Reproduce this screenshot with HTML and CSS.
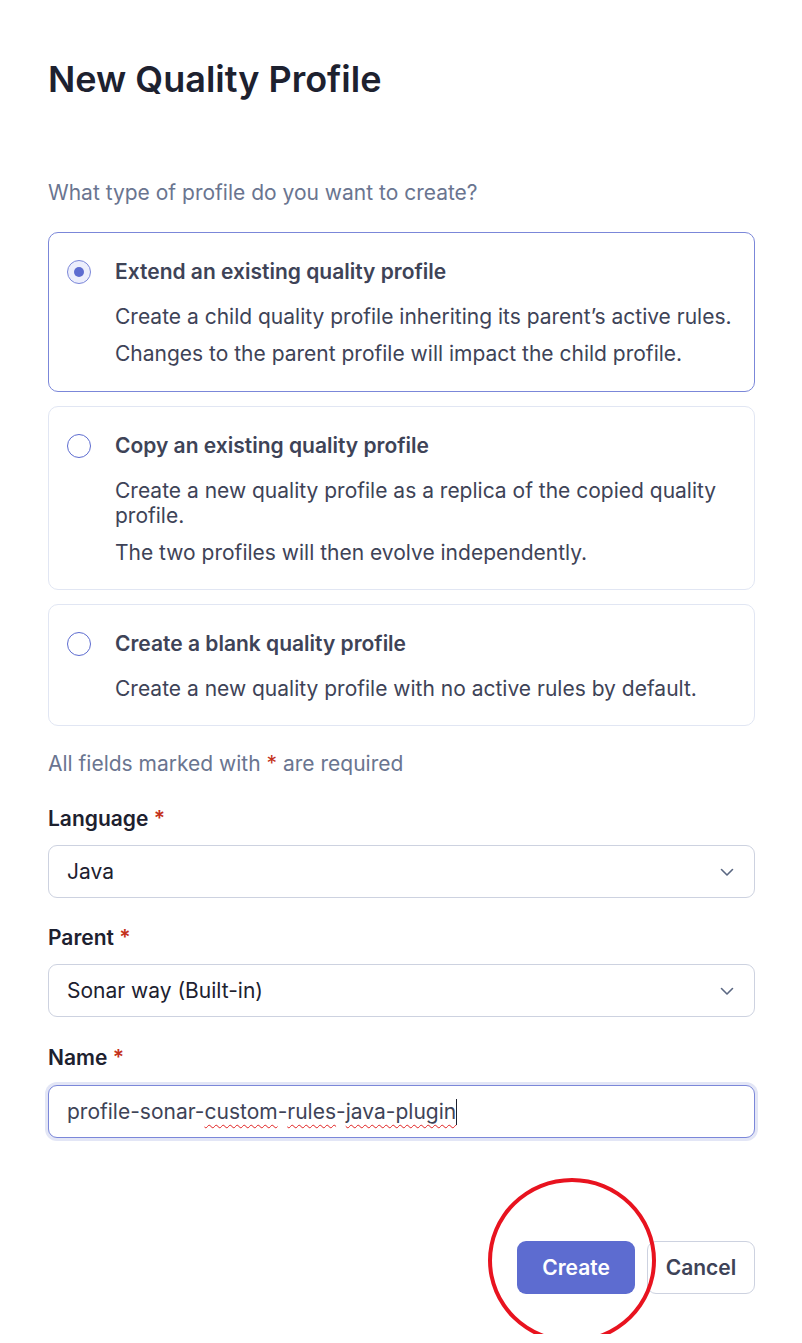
FILE: index.html
```html
<!DOCTYPE html>
<html lang="en">
<head>
<meta charset="utf-8">
<title>New Quality Profile</title>
<link rel="stylesheet" href="styles.css">
</head>
<body>
<div class="page">
  <h1 class="title">New Quality Profile</h1>
  <p class="question">What type of profile do you want to create?</p>

  <div class="options">
    <div class="option selected">
      <span class="radio checked"><span class="dot"></span></span>
      <div class="option-body">
        <div class="option-title">Extend an existing quality profile</div>
        <p class="option-desc">Create a child quality profile inheriting its parent’s active rules.</p>
        <p class="option-desc">Changes to the parent profile will impact the child profile.</p>
      </div>
    </div>
    <div class="option">
      <span class="radio"></span>
      <div class="option-body">
        <div class="option-title">Copy an existing quality profile</div>
        <p class="option-desc">Create a new quality profile as a replica of the copied quality profile.</p>
        <p class="option-desc">The two profiles will then evolve independently.</p>
      </div>
    </div>
    <div class="option">
      <span class="radio"></span>
      <div class="option-body">
        <div class="option-title">Create a blank quality profile</div>
        <p class="option-desc">Create a new quality profile with no active rules by default.</p>
      </div>
    </div>
  </div>

  <p class="required-note">All fields marked with <span class="req">*</span> are required</p>

  <div class="field first">
    <div class="label">Language <span class="req">*</span></div>
    <div class="select">
      <span>Java</span>
      <svg class="chevron" width="14" height="14" viewBox="0 0 14 14"><path d="M1.5 4.5l5.5 5.5 5.5-5.5" fill="none" stroke="#5a6782" stroke-width="1.6" stroke-linecap="round" stroke-linejoin="round"/></svg>
    </div>
  </div>

  <div class="field">
    <div class="label">Parent <span class="req">*</span></div>
    <div class="select">
      <span>Sonar way (Built-in)</span>
      <svg class="chevron" width="14" height="14" viewBox="0 0 14 14"><path d="M1.5 4.5l5.5 5.5 5.5-5.5" fill="none" stroke="#5a6782" stroke-width="1.6" stroke-linecap="round" stroke-linejoin="round"/></svg>
    </div>
  </div>

  <div class="field name">
    <div class="label">Name <span class="req">*</span></div>
    <div class="input-ring">
      <div class="input">profile-sonar-<span class="spell">custom</span>-<span class="spell">rules</span>-<span class="spell">java-plugin</span><span class="caret"></span></div>
    </div>
  </div>

  <div class="actions">
    <button class="btn primary">Create</button>
    <button class="btn secondary">Cancel</button>
    <span class="highlight"></span>
  </div>
</div>
</body>
</html>
```

FILE: styles.css
```css
* { box-sizing: border-box; }

html, body {
  margin: 0;
  padding: 0;
  background: #ffffff;
}

body {
  font-family: Inter, "Noto Sans", sans-serif;
  font-size: 21px;
  line-height: 25px;
  color: #3e4357;
}

.page {
  width: 707px;
  margin-left: 48px;
  padding-top: 57px;
  padding-bottom: 40px;
}

.title {
  margin: 0;
  font-size: 36px;
  line-height: 44px;
  font-weight: 600;
  color: #1d212f;
}

.question {
  margin: 79px 0 0;
  color: #6a7590;
}

.options {
  margin-top: 27px;
  display: flex;
  flex-direction: column;
  gap: 14px;
}

.option {
  display: flex;
  align-items: flex-start;
  gap: 24px;
  padding: 24px 20px 24px 18px;
  border: 1px solid #e1e6f3;
  border-radius: 10px;
}

.option.selected {
  border-color: #7b87d9;
  padding-bottom: 25px;
}

.radio {
  flex: none;
  width: 24px;
  height: 24px;
  margin-top: 3px;
  border-radius: 50%;
  border: 1.5px solid #5d6cd0;
  background: #fff;
  display: flex;
  align-items: center;
  justify-content: center;
}

.radio.checked {
  background: #eceefc;
  border-color: #7b87d9;
}

.radio .dot {
  width: 10px;
  height: 10px;
  border-radius: 50%;
  background: #5d6cd0;
}

.option-body {
  flex: 1;
}

.option-title {
  font-weight: 600;
  line-height: 30px;
  color: #3e4357;
  margin-bottom: 17px;
}

.option-desc {
  margin: 0;
}

.option-desc + .option-desc {
  margin-top: 12px;
}

.required-note {
  margin: 25px 0 0;
  color: #6a7590;
}

.req {
  color: #c4311b;
}

.field {
  margin-top: 27px;
}

.field.first {
  margin-top: 30px;
}

.field.name {
  margin-top: 28px;
}

.label {
  font-weight: 600;
  color: #1d212f;
  margin-bottom: 14px;
}

.select {
  height: 53px;
  border: 1px solid #cdd2e0;
  border-radius: 9px;
  padding: 0 20px 0 18px;
  display: flex;
  align-items: center;
  justify-content: space-between;
  color: #1d212f;
}

.chevron {
  flex: none;
}

.input-ring {
  margin: -2px -3px -3px;
  padding: 3px;
  border-radius: 12px;
  background: #e3e6f6;
}

.input {
  height: 53px;
  border: 1px solid #7b87d9;
  border-radius: 9px;
  background: #fff;
  padding: 0 18px;
  display: flex;
  align-items: center;
  color: #3e4357;
  white-space: pre;
}

.spell {
  text-decoration: underline wavy #e02020;
  text-decoration-thickness: 1px;
  text-underline-offset: 5px;
}

.caret {
  display: inline-block;
  width: 1px;
  height: 26px;
  background: #1d212f;
}

.actions {
  position: relative;
  margin-top: 103px;
  display: flex;
  justify-content: flex-end;
  gap: 12px;
}

.btn {
  font-family: inherit;
  font-size: 21px;
  font-weight: 600;
  height: 53px;
  border-radius: 9px;
  cursor: pointer;
}

.btn.primary {
  width: 118px;
  background: #5d6cd0;
  color: #ffffff;
  border: none;
}

.btn.secondary {
  width: 108px;
  background: #ffffff;
  color: #3e4357;
  border: 1px solid #cdd2e0;
}

.highlight {
  position: absolute;
  left: 440px;
  top: -63px;
  width: 168px;
  height: 165px;
  border: 4px solid #e8131f;
  border-radius: 50%;
  pointer-events: none;
}
```
